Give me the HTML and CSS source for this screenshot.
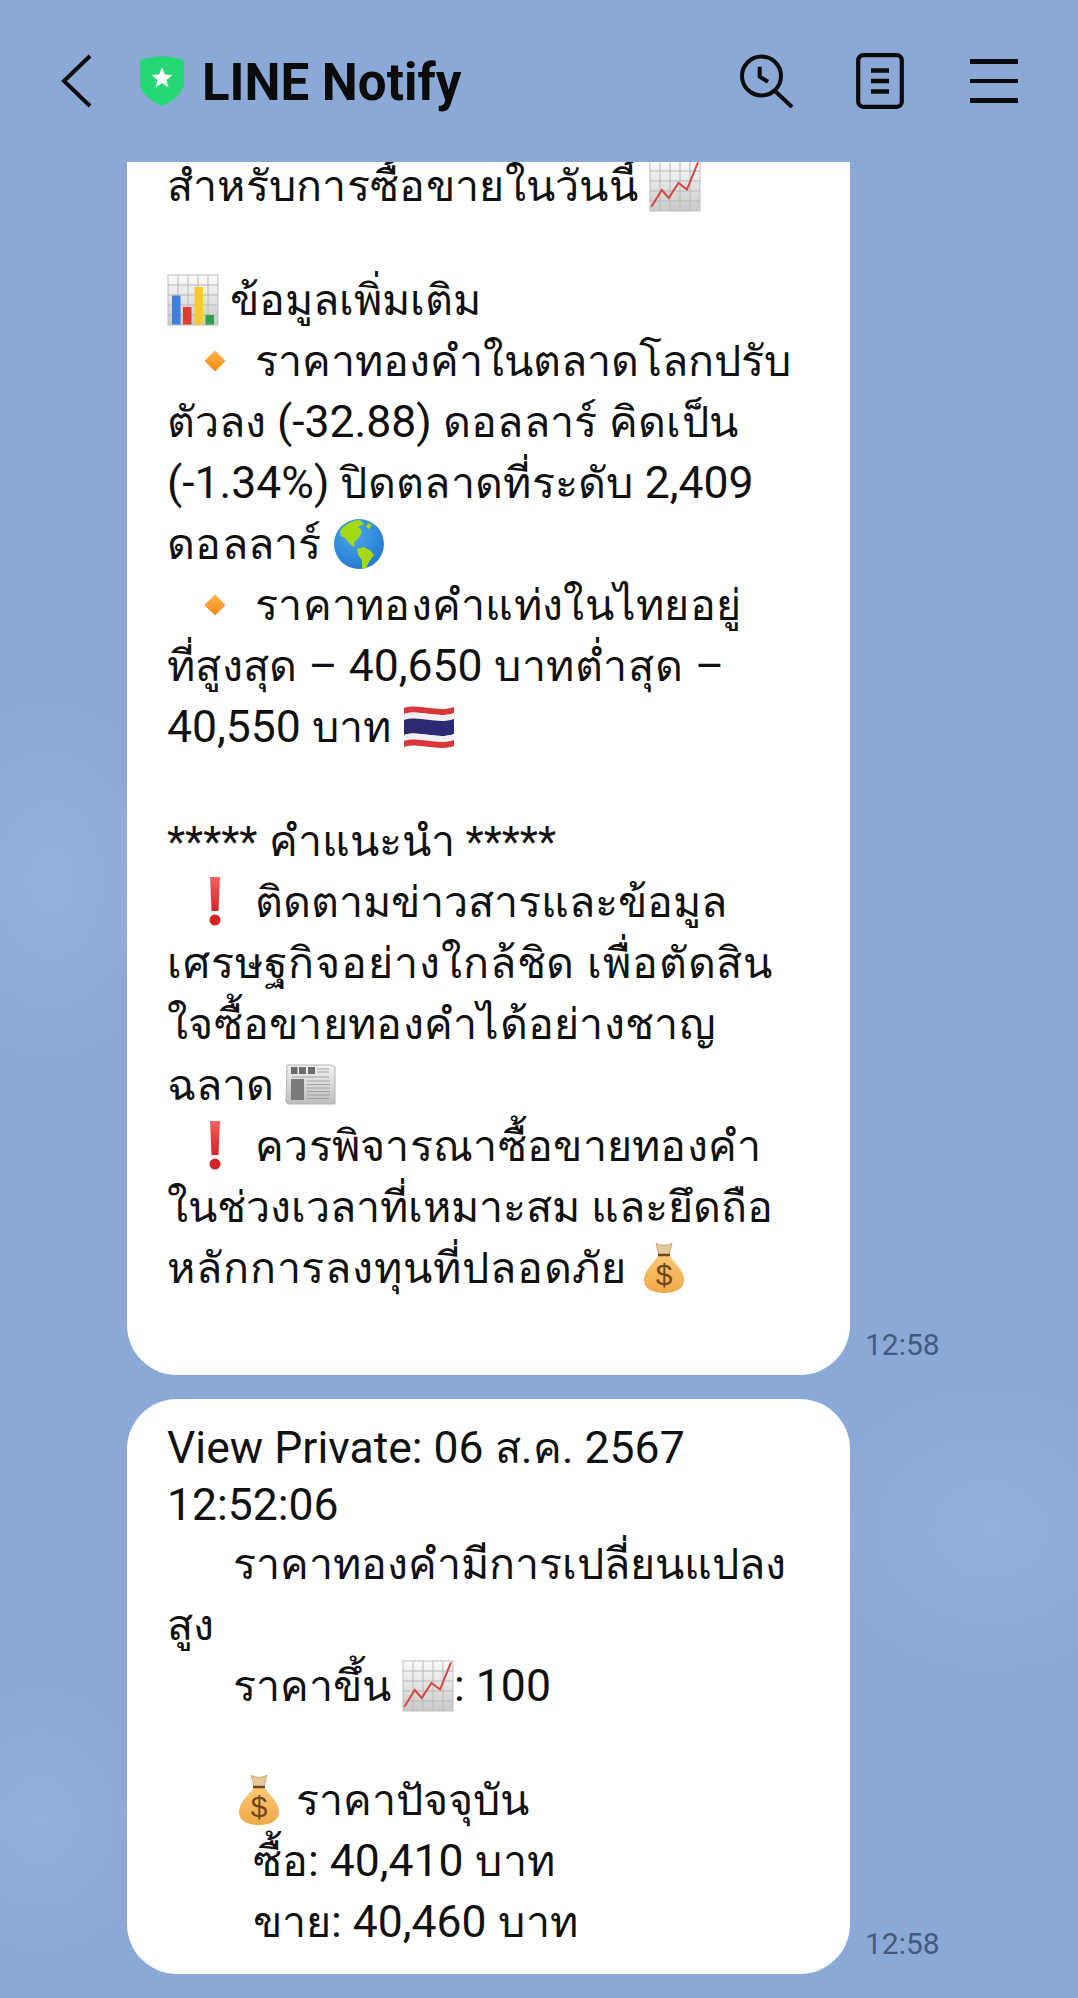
FILE: index.html
```html
<!DOCTYPE html>
<html lang="th">
<head>
<meta charset="utf-8">
<title>LINE Notify</title>
<link rel="stylesheet" href="styles.css">
</head>
<body>
<svg class="defs" width="0" height="0" aria-hidden="true">
  <defs>
    <linearGradient id="gPaper" x1="0" y1="0" x2="0" y2="1"><stop offset="0" stop-color="#fbfbfb"/><stop offset="1" stop-color="#c9c9c9"/></linearGradient>
    <linearGradient id="gBag" x1="0" y1="0" x2="0" y2="1"><stop offset="0" stop-color="#fbc773"/><stop offset="1" stop-color="#f0a94a"/></linearGradient>
    <linearGradient id="gDia" x1="0" y1="0" x2="0" y2="1"><stop offset="0" stop-color="#fdb24e"/><stop offset="1" stop-color="#f58a12"/></linearGradient>
    <linearGradient id="gExc" x1="0" y1="0" x2="0" y2="1"><stop offset="0" stop-color="#f2635f"/><stop offset="1" stop-color="#da2128"/></linearGradient>
    <linearGradient id="gNews" x1="0" y1="0" x2="0" y2="1"><stop offset="0" stop-color="#f2f2f2"/><stop offset="1" stop-color="#bdbdbd"/></linearGradient>
    <radialGradient id="gSea" cx=".4" cy=".3" r=".8"><stop offset="0" stop-color="#4aa8ea"/><stop offset="1" stop-color="#1f74cf"/></radialGradient>
    <g id="grid">
      <rect x="1" y="1" width="50" height="50" fill="url(#gPaper)" stroke="#bdbdbd"/>
      <path d="M1 11h50M1 21h50M1 31h50M1 41h50M11 1v50M21 1v50M31 1v50M41 1v50" stroke="#b8b8b8" stroke-width="1" fill="none"/>
    </g>
    <symbol id="chart" viewBox="0 0 52 52">
      <use href="#grid"/>
      <path d="M2.400 46.800 L12.800 30 L19.700 38 L29.500 23 L38 29.500 L49 2.400" fill="none" stroke="#d4493f" stroke-width="2"/>
    </symbol>
    <symbol id="bars" viewBox="0 0 52 52">
      <use href="#grid"/>
      <rect x="5" y="21.500" width="8.500" height="29" fill="#3f7fe0"/>
      <rect x="16" y="33" width="8.500" height="17.500" fill="#e23c30"/>
      <rect x="27.500" y="13" width="8.500" height="37.500" fill="#f7cb2f"/>
      <rect x="38.500" y="41" width="8.500" height="9.500" fill="#2f9e55"/>
    </symbol>
    <symbol id="diamond" viewBox="0 0 52 52">
      <path d="M26 16.5 L35.5 26 L26 35.5 L16.500 26 Z" fill="url(#gDia)" stroke="url(#gDia)" stroke-width="1.500" stroke-linejoin="round"/>
    </symbol>
    <symbol id="globe" viewBox="0 0 52 52">
      <circle cx="26" cy="26" r="25" fill="url(#gSea)"/>
      <path d="M7 13 C12 6 20 2 27 2 L31 6 L25 9 L29 13 L26 20 L21 24 L22 29 L18 27 L12 20 L8 18 Z" fill="#a5d914"/>
      <path d="M24 31 L31 29 L38 33 L41 37 L36 44 L33 50 L29 50 L29 42 L25 37 Z" fill="#a5d914"/>
      <path d="M35 5 L39 7 L36 11 L33 9 Z" fill="#a5d914"/>
    </symbol>
    <symbol id="flag" viewBox="0 0 52 52">
      <path d="M1 7 C17 2 34 12 51 6 V12 C34 18 17 8 1 13 Z" fill="#d9363a"/>
      <path d="M1 13 C17 8 34 18 51 12 V18 C34 24 17 14 1 19 Z" fill="#f2eef2"/>
      <path d="M1 19 C17 14 34 24 51 18 V33 C34 39 17 29 1 34 Z" fill="#2c2a72"/>
      <path d="M1 34 C17 29 34 39 51 33 V39 C34 45 17 35 1 40 Z" fill="#f2eef2"/>
      <path d="M1 40 C17 35 34 45 51 39 V45 C34 51 17 41 1 46 Z" fill="#d9363a"/>
    </symbol>
    <symbol id="excl" viewBox="0 0 52 52">
      <path d="M21 1 H31 L29.500 35 H22.500 Z" fill="url(#gExc)"/>
      <circle cx="26" cy="44" r="5.500" fill="#da2128"/>
    </symbol>
    <symbol id="news" viewBox="0 0 52 52">
      <path d="M2 6 H47 L50 8 V45 H3 L1 43 Z" fill="url(#gNews)" stroke="#b5b5b5"/>
      <rect x="6" y="8" width="6.500" height="7" fill="#6d6d6d"/>
      <rect x="14" y="8" width="7" height="7" fill="#6d6d6d"/>
      <rect x="23" y="8" width="7" height="7" fill="#6d6d6d"/>
      <path d="M32 10h12M32 13h12M7 18h37" stroke="#a2a2a2" stroke-width="1"/>
      <rect x="6" y="20" width="13" height="21" fill="#7a7a7a"/>
      <path d="M22 22h23M22 25.500h23M22 29h23M22 32.500h23M22 36h23M22 39.500h23" stroke="#a2a2a2" stroke-width="1"/>
    </symbol>
    <symbol id="bag" viewBox="0 0 52 52">
      <path d="M18 1 C22 4 30 4 34 1 L31 13 H21 Z" fill="#e6c99a" stroke="#c49a5e" stroke-width=".8"/>
      <path d="M21 13 H31 C36 21 46 28 46 38 C46 47 37 51 26 51 C15 51 6 47 6 38 C6 28 16 21 21 13 Z" fill="url(#gBag)"/>
      <path d="M20 13 H32" stroke="#6b4a22" stroke-width="2.500"/>
      <text x="26" y="43" text-anchor="middle" class="bagtext">$</text>
    </symbol>
  </defs>
</svg>

<header class="bar">
  <svg class="ic-back" viewBox="0 0 32 54"><path d="M29 2 L3 27 L29 52" fill="none" stroke="#0c0c0c" stroke-width="4"/></svg>
  <svg class="ic-shield" viewBox="0 0 44 50">
    <path d="M22 0 C29 0.500 37 2 44 4 V27 C44 37 33 45 22 50 C11 45 0 37 0 27 V4 C7 2 15 0.500 22 0 Z" fill="#25d873"/>
    <path d="M22 11 L24.800 18.500 L32.500 19 L26.500 24 L28.500 31.500 L22 27.300 L15.500 31.500 L17.500 24 L11.500 19 L19.200 18.500 Z" fill="#fff"/>
  </svg>
  <h1 class="title">LINE Notify</h1>
  <div class="tools">
    <svg class="ic-search" viewBox="0 0 54 54"><circle cx="21.500" cy="22" r="19.500" fill="none" stroke="#0c0c0c" stroke-width="4"/><path d="M19.700 12.700 V22.700 L28 27.700" fill="none" stroke="#0c0c0c" stroke-width="4"/><path d="M34 36 L52 53" stroke="#0c0c0c" stroke-width="4"/></svg>
    <svg class="ic-doc" viewBox="0 0 48 56"><rect x="2.200" y="2.200" width="43.600" height="51.600" rx="5" fill="none" stroke="#0c0c0c" stroke-width="4.200"/><path d="M15 17.500 H33 M15 28 H33 M15 38.500 H33" stroke="#0c0c0c" stroke-width="4.500"/></svg>
    <div class="ic-menu"><span></span><span></span><span></span></div>
  </div>
</header>

<main class="chat">
  <div class="row row-clipped">
    <article class="bubble">
      <div class="ln"><span class="t w1">สำหรับการซื้อขายในวันนี้</span> <svg class="emo"><use href="#chart"/></svg></div>
      <div class="ln ln-blank"></div>
      <div class="ln"><svg class="emo"><use href="#bars"/></svg> <span class="t">ข้อมูลเพิ่มเติม</span></div>
      <div class="ln"><svg class="emo emo-d"><use href="#diamond"/></svg><span class="t">ราคาทองคำในตลาดโลกปรับ</span></div>
      <div class="ln"><span class="t">ตัวลง</span> (-32.88) <span class="t w1">ดอลลาร์ คิดเป็น</span></div>
      <div class="ln">(-1.34%) <span class="t w1">ปิดตลาดที่ระดับ</span> 2,409</div>
      <div class="ln"><span class="t w1">ดอลลาร์</span> <svg class="emo"><use href="#globe"/></svg></div>
      <div class="ln"><svg class="emo emo-d"><use href="#diamond"/></svg><span class="t w1">ราคาทองคำแท่งในไทยอยู่</span></div>
      <div class="ln"><span class="t w1">ที่สูงสุด</span> – 40,650 <span class="t w2">บาทต่ำสุด</span> –</div>
      <div class="ln">40,550 <span class="t w1">บาท</span> <svg class="emo"><use href="#flag"/></svg></div>
      <div class="ln ln-blank"></div>
      <div class="ln"><span class="ast">*****</span> <span class="t">คำแนะนำ</span> <span class="ast">*****</span></div>
      <div class="ln"><svg class="emo emo-d"><use href="#excl"/></svg><span class="t">ติดตามข่าวสารและข้อมูล</span></div>
      <div class="ln"><span class="t w2">เศรษฐกิจอย่างใกล้ชิด เพื่อตัดสิน</span></div>
      <div class="ln"><span class="t w1">ใจซื้อขายทองคำได้อย่างชาญ</span></div>
      <div class="ln"><span class="t">ฉลาด</span> <svg class="emo"><use href="#news"/></svg></div>
      <div class="ln"><svg class="emo emo-d"><use href="#excl"/></svg><span class="t w1">ควรพิจารณาซื้อขายทองคำ</span></div>
      <div class="ln"><span class="t">ในช่วงเวลาที่เหมาะสม และยึดถือ</span></div>
      <div class="ln"><span class="t w2">หลักการลงทุนที่ปลอดภัย</span> <svg class="emo"><use href="#bag"/></svg></div>
    </article>
    <time class="stamp">12:58</time>
  </div>
  <div class="row">
    <article class="bubble bubble-full">
      <div class="ln ln-latin">View Private: 06 <span class="t w1">ส.ค.</span> 2567</div>
      <div class="ln ln-latin">12:52:06</div>
      <div class="ln"><span class="pad-a"></span><span class="t">ราคาทองคำมีการเปลี่ยนแปลง</span></div>
      <div class="ln"><span class="t">สูง</span></div>
      <div class="ln"><span class="pad-a"></span><span class="t">ราคาขึ้น</span> <svg class="emo"><use href="#chart"/></svg>: 100</div>
      <div class="ln ln-blank"></div>
      <div class="ln"><span class="pad-a"></span><svg class="emo"><use href="#bag"/></svg> <span class="t">ราคาปัจจุบัน</span></div>
      <div class="ln"><span class="pad-b"></span><span class="t">ซื้อ</span>: 40,410 <span class="t w2">บาท</span></div>
      <div class="ln"><span class="pad-b"></span><span class="t">ขาย</span>: 40,460 <span class="t w2">บาท</span></div>
    </article>
    <time class="stamp">12:58</time>
  </div>
</main>
</body>
</html>
```
FILE: styles.css
```css
* { box-sizing: border-box; }
html, body { margin: 0; padding: 0; }
body {
  width: 1078px;
  height: 1998px;
  overflow: hidden;
  font-family: Roboto, "Noto Sans", "DejaVu Sans", sans-serif;
  color: #111;
  background-color: #8aa9d7;
  background-image:
    radial-gradient(ellipse 130px 190px at 50px 880px, rgba(255,255,255,.09), transparent),
    radial-gradient(ellipse 180px 150px at 990px 1530px, rgba(255,255,255,.08), transparent),
    radial-gradient(ellipse 120px 140px at 40px 1820px, rgba(255,255,255,.08), transparent);
}
.defs { position: absolute; }
.bagtext { font: 400 30px "Liberation Sans", sans-serif; fill: #6f4519; }

.bar { height: 162px; display: flex; align-items: center; padding: 0 60px 0 61px; }
.ic-back { width: 32px; height: 54px; flex: none; }
.ic-shield { width: 44px; height: 50px; flex: none; margin-left: 47px; margin-top: -1px; }
.title { margin: 3px 0 0 18px; font-size: 51px; font-weight: 700; line-height: 60px; color: #0b0b0b; }
.tools { margin-left: auto; display: flex; align-items: center; }
.ic-search { width: 54px; height: 54px; }
.ic-doc { width: 48px; height: 56px; margin-left: 62px; }
.ic-menu { width: 48px; margin-left: 66px; display: flex; flex-direction: column; gap: 14.700px; }
.ic-menu span { display: block; height: 4.700px; background: #0c0c0c; }

.chat { height: 1836px; overflow: hidden; display: flex; flex-direction: column; gap: 24px; padding-left: 127px; }
.row { display: flex; align-items: flex-end; gap: 15px; flex: none; }
.row-clipped { margin-top: -6px; }
.bubble { width: 723px; background: #fff; padding: 0 20px 76px 40px; border-radius: 0 0 50px 50px; }
.bubble-full { border-radius: 50px; padding: 21px 20px 21px 40px; }
.stamp { font-size: 30px; color: #46597d; line-height: 32px; margin-bottom: 14px; }

.ln { height: 61px; line-height: 61px; font-size: 44.500px; white-space: pre; }
.ln-blank { height: 53px; }
.ln-latin { height: 57px; line-height: 57px; }
.t { font-size: 43px; }
.w1 { letter-spacing: .3px; }
.w2 { letter-spacing: .9px; }
.ast { font-size: 42px; }
.emo { width: 52px; height: 52px; vertical-align: -11px; }
.emo-d { margin-left: 22px; margin-right: 14px; }
.pad-a { display: inline-block; width: 66px; }
.pad-b { display: inline-block; width: 86px; }
```
